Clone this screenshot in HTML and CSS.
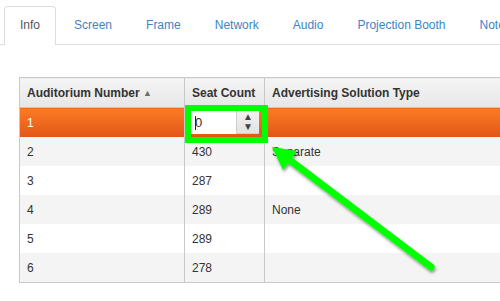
FILE: index.html
```html
<!DOCTYPE html>
<html lang="en">
<head>
  <meta charset="UTF-8">
  <title>Auditoriums</title>
  <link rel="stylesheet" href="styles.css">
</head>
<body>
  <!-- Tabs -->
  <ul class="tabs">
    <li class="tab active">Info</li>
    <li class="tab">Screen</li>
    <li class="tab">Frame</li>
    <li class="tab">Network</li>
    <li class="tab">Audio</li>
    <li class="tab">Projection Booth</li>
    <li class="tab">Notes</li>
  </ul>

  <table class="grid">
    <thead>
      <tr>
        <th class="col-num">Auditorium Number <span class="sort">&#9650;</span></th>
        <th class="col-seats">Seat Count</th>
        <th>Advertising Solution Type</th>
      </tr>
    </thead>
    <tbody>
      <tr class="selected">
        <td>1</td>
        <td>
          <div class="num-input">
            <span class="value"><span class="caret"></span>0</span>
            <span class="spin"><span>&#9650;</span><span>&#9660;</span></span>
          </div>
        </td>
        <td></td>
      </tr>
      <tr class="alt"><td>2</td><td>430</td><td>Separate</td></tr>
      <tr><td>3</td><td>287</td><td></td></tr>
      <tr class="alt"><td>4</td><td>289</td><td>None</td></tr>
      <tr><td>5</td><td>289</td><td></td></tr>
      <tr class="alt"><td>6</td><td>278</td><td></td></tr>
    </tbody>
  </table>

  <!-- annotation -->
  <svg class="markup" width="500" height="301" viewBox="0 0 500 301">
    <defs>
      <filter id="shadow" x="-20%" y="-20%" width="140%" height="140%">
        <feDropShadow dx="1" dy="2" stdDeviation="1.5" flood-color="#000" flood-opacity="0.45"/>
      </filter>
    </defs>
    <rect x="188" y="108" width="77" height="32" fill="none" stroke="#00ff00" stroke-width="6"/>
    <g filter="url(#shadow)">
      <line x1="431" y1="267" x2="287" y2="158" stroke="#00ff00" stroke-width="7" stroke-linecap="round"/>
      <polygon points="272,147 283,170 297,151" fill="#00ff00"/>
    </g>
  </svg>
</body>
</html>
```

FILE: styles.css
```css
body {
  margin: 0;
  font-family: "Liberation Sans", Arial, sans-serif;
  font-size: 12px;
  color: #333;
  background: #fff;
  width: 500px;
  height: 301px;
  overflow: hidden;
  position: relative;
}

.tabs {
  display: flex;
  list-style: none;
  margin: 6px 0 0;
  padding: 0 0 0 4px;
  border-bottom: 1px solid #ddd;
  white-space: nowrap;
}

.tab {
  padding: 0 15px;
  line-height: 37px;
  margin-right: 2px;
  margin-bottom: -1px;
  border: 1px solid transparent;
  border-bottom: none;
  border-radius: 4px 4px 0 0;
  color: #3b85c8;
}

.tab.active {
  color: #555;
  border-color: #ddd;
  background: #fff;
  height: 38px;
}

.grid {
  margin: 32px 0 0 19px;
  border-collapse: collapse;
  width: 620px;
  border: 1px solid #c8c8c8;
}

.grid th {
  text-align: left;
  font-weight: bold;
  height: 29px;
  padding: 0 7px;
  background: linear-gradient(#f5f5f5, #e6e6e6);
  border: 1px solid #c8c8c8;
  color: #333;
}

.grid td {
  height: 29px;
  padding: 0 7px;
  border-left: 1px solid #c8c8c8;
  border-right: 1px solid #c8c8c8;
}

.col-num { width: 150px; }
.col-seats { width: 64px; }

.sort {
  font-size: 9px;
  color: #6e6e6e;
  position: relative;
  top: -1px;
}

.alt td { background: #f4f4f4; }

.selected td {
  background: linear-gradient(#fb7b23, #e2561a);
  color: #fff;
}

.selected td:nth-child(2) {
  padding: 0 5px 0 6px;
}

.num-input {
  display: flex;
  width: 68px;
  height: 23px;
  background: #fff;
  color: #333;
  box-sizing: border-box;
}

.num-input .value {
  flex: 1;
  display: flex;
  align-items: center;
  padding-left: 4px;
  font-size: 13px;
}

.caret {
  display: inline-block;
  width: 1px;
  height: 14px;
  background: #222;
  margin-right: -1px;
}

.spin {
  width: 22px;
  display: flex;
  flex-direction: column;
  align-items: center;
  justify-content: center;
  background: linear-gradient(#f2f2f2, #e2e2e2);
  border-left: 1px solid #cfcfcf;
  border-bottom: 1px solid #cfcfcf;
  font-size: 10px;
  line-height: 10px;
  color: #444;
}

.markup {
  position: absolute;
  left: 0;
  top: 0;
  pointer-events: none;
}
```
